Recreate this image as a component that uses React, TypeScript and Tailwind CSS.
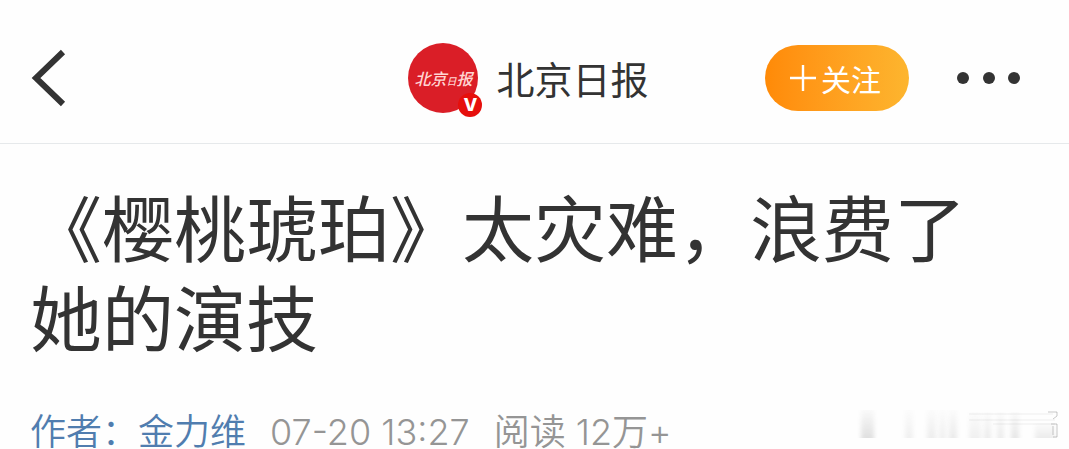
const article = {
  source: '北京日报',
  title: '《樱桃琥珀》太灾难，浪费了她的演技',
  author: '金力维',
  time: '07-20 13:27',
  reads: '阅读 12万+',
}

// Vertical streaks of the faded stamp in the corner
const streaks = [
  { x: 20, y: 2, w: 13, h: 28, opacity: 0.22 },
  { x: 64, y: 2, w: 8, h: 28, opacity: 0.1 },
  { x: 86, y: 2, w: 9, h: 28, opacity: 0.12 },
  { x: 98, y: 2, w: 7, h: 28, opacity: 0.1 },
  { x: 108, y: 2, w: 8, h: 28, opacity: 0.14 },
  { x: 128, y: 4, w: 12, h: 26, opacity: 0.1 },
  { x: 143, y: 4, w: 7, h: 26, opacity: 0.13 },
  { x: 156, y: 4, w: 7, h: 26, opacity: 0.13 },
  { x: 170, y: 4, w: 8, h: 26, opacity: 0.17 },
  { x: 194, y: 15, w: 20, h: 15, opacity: 0.13 },
]

function Avatar() {
  return (
    <div className="relative flex size-[70px] shrink-0 items-center justify-center rounded-full bg-[#da1e27]">
      <span className="text-[16px] leading-none font-medium whitespace-nowrap text-[#ffd5d3] italic">
        北京<span className="text-[10px]">日</span>报
      </span>
      <span className="absolute -right-1 -bottom-1 flex size-6 items-center justify-center rounded-full bg-[#e60f0c] font-['Inter'] text-[18px] leading-none font-extrabold text-white">
        V
      </span>
    </div>
  )
}

function Stamp() {
  return (
    <svg width="220" height="32" viewBox="0 8 220 32" className="overflow-visible" aria-hidden="true">
      <defs>
        <linearGradient id="fade" x1="0" y1="0" x2="0" y2="1">
          <stop offset="0" stopColor="#777" stopOpacity="0.15" />
          <stop offset="1" stopColor="#777" />
        </linearGradient>
        <filter id="soft" x="-50%" y="-10%" width="200%" height="120%">
          <feGaussianBlur stdDeviation="2 0.3" />
        </filter>
      </defs>
      {streaks.map(s => (
        <rect key={s.x} x={s.x} y={s.y} width={s.w} height={s.h} fill="url(#fade)" opacity={s.opacity} filter="url(#soft)" />
      ))}
      <path d="M128 6h84M128 12h86M152 16h62" stroke="#999" strokeWidth="1" opacity="0.15" fill="none" />
      <path d="M207 4h9v4l-4 3M210 16h6v13h-4M212 18v9" stroke="#777" strokeWidth="1" opacity="0.4" fill="none" />
    </svg>
  )
}

export default function App() {
  return (
    <div className="min-h-screen bg-[#fefefe] font-['Noto_Sans_CJK_SC',sans-serif] text-[#333]">
      {/* Top bar */}
      <header className="grid h-36 grid-cols-[1fr_auto_1fr] items-center border-b border-[#e6e9eb] pt-3 pr-12 pl-7">
        <button type="button" aria-label="返回" className="justify-self-start">
          <svg width="40" height="60" viewBox="0 0 40 60" fill="none" stroke="currentColor" strokeWidth="6">
            <path d="M35 4 8 30l27 26" />
          </svg>
        </button>

        <div className="ml-2 flex items-center gap-[18px]">
          <Avatar />
          <span className="text-[38px] leading-none">{article.source}</span>
        </div>

        <div className="flex items-center gap-12 justify-self-end">
          <button
            type="button"
            className="flex h-[66px] w-36 items-center justify-center gap-1 rounded-full bg-linear-to-r from-[#ff8a07] to-[#fdb52e] pr-1 text-[30px] leading-none text-white"
          >
            <svg width="28" height="28" viewBox="0 0 28 28" stroke="currentColor" strokeWidth="2.4" aria-hidden="true">
              <path d="M1 14h26M14 1v26" />
            </svg>
            关注
          </button>
          <button type="button" aria-label="更多">
            <svg width="64" height="14" viewBox="0 0 64 14" fill="currentColor">
              <circle cx="6" cy="7" r="6" />
              <circle cx="32" cy="7" r="6" />
              <circle cx="57" cy="7" r="6" />
            </svg>
          </button>
        </div>
      </header>

      {/* Article heading */}
      <main className="pt-9 pr-2 pl-[30px]">
        <h1 className="pr-12 text-[72px] leading-[90px]">{article.title}</h1>

        <div className="mt-14 flex items-center justify-between">
          <div className="flex items-center gap-6 font-['Inter','Noto_Sans_CJK_SC',sans-serif] text-[36px] leading-8 font-[350] whitespace-nowrap text-[#959595]">
            <a href="#author" className="text-[#507daf]">
              作者：{article.author}
            </a>
            <time>{article.time}</time>
            <span>{article.reads}</span>
          </div>
          <Stamp />
        </div>
      </main>
    </div>
  )
}
